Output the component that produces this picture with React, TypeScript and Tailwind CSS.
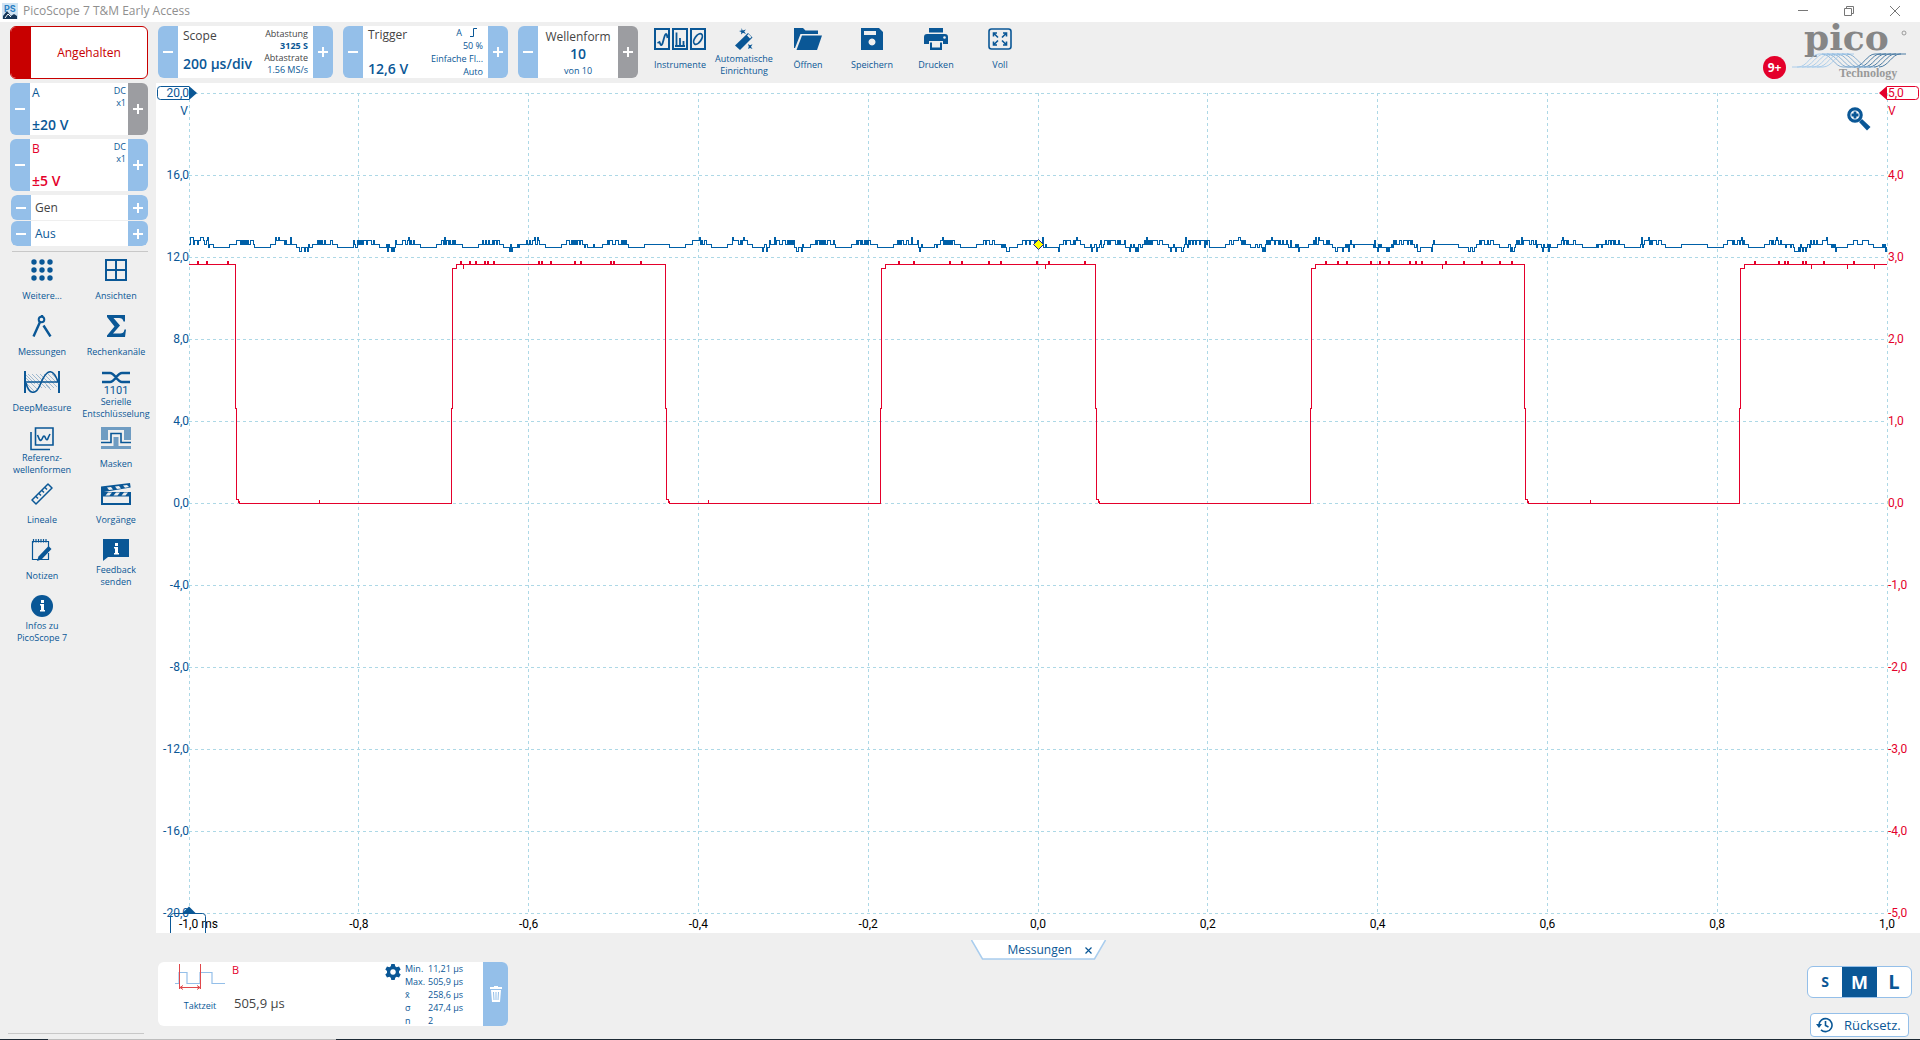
import type { ReactNode } from "react";

const BLUE = "#0a5796";
const RED = "#e4002b";

/* ---------- icons ---------- */

const GridDots = () => (
  <svg width="22" height="22" viewBox="0 0 22 22" fill={BLUE}>
    {[3, 11, 19].map((y) => [3, 11, 19].map((x) => <circle key={`${x}-${y}`} cx={x} cy={y} r="2.7" />))}
  </svg>
);

const ViewsIcon = () => (
  <svg width="22" height="22" viewBox="0 0 22 22" fill="none" stroke={BLUE} strokeWidth="2">
    <path d="M1 1h20v20H1zM11 1v20M1 11h20" />
  </svg>
);

const CompassIcon = () => (
  <svg width="22" height="22" viewBox="0 0 22 22" fill="none" stroke={BLUE} strokeWidth="2">
    <circle cx="10.500" cy="4.500" r="2.800" />
    <path d="M11 0v2M9 7L2.500 21.500M12.500 10.500L19.500 21.500" strokeWidth="2.400" />
  </svg>
);

const SigmaIcon = () => (
  <svg width="22" height="22" viewBox="0 0 22 22" fill={BLUE}>
    <path d="M2 0h18v6.500h-1.500C18 4 16.500 3 14 3H8.500l6.500 7.500L8 18.500h7c2.500 0 4-1 4.500-4H21L20 22H2v-1.500l7.500-9L2 2z" />
  </svg>
);

const DeepMeasureIcon = () => (
  <svg width="36" height="22" viewBox="0 0 36 22" fill="none" stroke={BLUE}>
    <path
      d="M2 7l12 12M2 4l9 9M4 3l14 14M8 3l14 14M12 3l14 14M16 3l14 14M20 3l13 13M24 3l9 9M28 3l5 5M2 12l8 8M22 14l5 5"
      strokeWidth="0.6"
      opacity="0.6"
    />
    <path d="M1 0v22M35 0v22" strokeWidth="2" />
    <path d="M1 11h34" strokeWidth="1.5" />
    <path d="M2 12c3 12 10 12 14 2S25-3 30 3c2 2 3 5 4 8" strokeWidth="1.6" />
  </svg>
);

const SerialIcon = () => (
  <svg className="shrink-0 overflow-visible" width="30" height="28" viewBox="0 0 30 28" fill="none">
    <path d="M1 2h8c5 0 7 9 12 9h8M1 11h8c5 0 7-9 12-9h8" stroke={BLUE} strokeWidth="2.4" />
    <text x="15" y="23" textAnchor="middle" fontFamily="Roboto, sans-serif" fontSize="11" fill={BLUE}>
      1101
    </text>
  </svg>
);

const ReferenceIcon = () => (
  <svg width="24" height="24" viewBox="0 0 24 24" fill="none" stroke={BLUE} strokeWidth="1.6">
    <path d="M5.500 1h17.500v17H5.500z" />
    <path d="M1 5v17.500h19" />
    <path d="M7.500 8l2 4.500c1 1.500 2 1 3-1.500s2-2.500 3 0 2 2.500 3-1l1.500-3" />
  </svg>
);

const MaskIcon = () => (
  <svg width="30" height="22" viewBox="0 0 30 22" fill="none">
    <path d="M0 0h30v13h-7V3H7v10H0z" fill="#6f9cc2" />
    <path d="M0 15.500h10v-9h10v9h10" stroke={BLUE} strokeWidth="1.600" />
    <path d="M12.500 10h5v9H30v3H0v-3h12.500z" fill="#6f9cc2" />
  </svg>
);

const RulerIcon = () => (
  <svg width="22" height="22" viewBox="0 0 22 22" fill="none" stroke={BLUE} strokeWidth="1.500">
    <path d="M17 1l4 4L5 21l-4-4z" strokeLinejoin="round" />
    <path d="M5 13.500l2 2M8 10.500l2 2M11 7.500l2 2M14 4.500l2 2" />
  </svg>
);

const ClapperIcon = () => (
  <svg width="30" height="22" viewBox="0 0 30 22">
    <path d="M0 3.500L29 0l.7 4.500L3 9h27v13H0z" fill={BLUE} />
    <path d="M2 13.500h26v6.500H2z" fill="#efefef" />
    <path
      d="M6 4.500l4-.5 2 2.500-4 .6zM14 3.500l4-.5 2 2.500-4 .6zM22 2.500l4-.5 2 2-4 .7zM7 9.500h4l-2.500 3h-4zM15 9.500h4l-2.500 3h-4zM23 9.500h4l-2.500 3h-4z"
      fill="#efefef"
    />
  </svg>
);

const NotesIcon = () => (
  <svg width="22" height="22" viewBox="0 0 22 22" fill="none" stroke={BLUE}>
    <path d="M17.500 14v6.500H1.500v-18h16V8" strokeWidth="1.200" />
    <path d="M2.500 3.500V0M5 3.500V0M7.500 3.500V0M10 3.500V0M12.500 3.500V0M15 3.500V0" strokeWidth="1.200" />
    <path d="M7.500 17.500L17.500 7l3 3L10.500 20.500l-4.500 1.500z" fill={BLUE} stroke="none" />
  </svg>
);

const FeedbackIcon = () => (
  <svg width="28" height="22" viewBox="0 0 28 22">
    <path d="M1 0h26v18H6l-5 4z" fill={BLUE} />
    <path d="M13 4h3v3h-3zM12 8h4v6h1v1.500h-5V14h1V9.500h-1z" fill="#fff" />
  </svg>
);

const InfoIcon = () => (
  <svg width="22" height="22" viewBox="0 0 22 22">
    <circle cx="11" cy="11" r="11" fill={BLUE} />
    <path d="M10 5h3v3h-3zM9 9h4v6h1v1.500H9V15h1v-4.500H9z" fill="#fff" />
  </svg>
);

const InstrumentsIcon = () => (
  <svg width="52" height="22" viewBox="0 0 52 22" fill="none" stroke={BLUE} strokeWidth="2">
    <path d="M1 1h14v20H1zM19 1h14v20H19zM37 1h14v20H37z" />
    <path d="M3.500 15l2-1c2 6 3 2 4-2 1.500-6 3-9 4-2" strokeWidth="1.800" />
    <path d="M21 18h10M22.500 18V4.500M26 18V10M29.500 18v-5" strokeWidth="1.800" />
    <ellipse cx="44" cy="11" rx="6" ry="3.200" transform="rotate(-55 44 11)" strokeWidth="1.800" />
  </svg>
);

const WandIcon = () => (
  <svg width="20" height="22" viewBox="0 0 20 22" fill="none">
    <path d="M14 5l4.500 4.500L6 22 1 17.500z" fill={BLUE} />
    <path d="M13 7.500l1.500-1.500 3 3-1.500 1.500z" fill="#efefef" />
    <path d="M7.500 0l1.200 2.500L12 1.500l-1.800 2L12 6 9 4.800 7 6.500l.3-2.500L5 3l2.500-.4zM14 16l2 1.200 2.500-1-1.500 2.500 1.500 2.300-2.500-1-2 1 .8-2.300z" fill={BLUE} />
  </svg>
);

const OpenIcon = () => (
  <svg width="28" height="22" viewBox="0 0 28 22" fill={BLUE}>
    <path d="M0 0h9l2.500 2.500H24V6H6.500L1 20H0z" />
    <path d="M8 7.500h20L23 22H2.500z" />
  </svg>
);

const SaveIcon = () => (
  <svg width="22" height="22" viewBox="0 0 22 22" fill={BLUE} fillRule="evenodd">
    <path d="M0 0h18l4 4v18H0zM3 3v4h12V3zM11 10.500a3.500 3.500 0 1 0 .01 0z" />
  </svg>
);

const PrintIcon = () => (
  <svg width="24" height="22" viewBox="0 0 24 22" fill={BLUE}>
    <path d="M5 0h14v4.500H5zM3 6h18q3 0 3 3v7h-5v-3H5v3H0V9q0-3 3-3z" />
    <path d="M6 14.500h12V22H6z" />
    <path d="M8 14h8v5.500H8z" fill="#efefef" />
    <circle cx="20.500" cy="9.500" r="1.300" fill="#efefef" />
  </svg>
);

const FullIcon = () => (
  <svg width="24" height="22" viewBox="0 0 24 22" fill="none" stroke={BLUE} strokeWidth="1.600">
    <rect x="1" y="1" width="22" height="20" rx="2.500" />
    <path d="M5.500 8.500V5H9M6 5.500l4 4M18.500 8.500V5H15M18 5.500l-4 4M5.500 13.500V17H9M6 16.500l4-4M18.500 13.500V17H15M18 16.500l-4-4" />
  </svg>
);

const PicoLogo = () => (
  <svg className="overflow-visible" width="118" height="56" viewBox="0 0 118 56" fill="none" role="img" aria-label="pico Technology">
    <text x="12" y="24" fontFamily="'DejaVu Serif', serif" fontWeight="700" fontSize="36" fill="#868686">
      pico
    </text>
    <circle cx="112" cy="7" r="2" stroke="#868686" strokeWidth="0.8" />
    {[0, 1, 2, 3, 4, 5].map((i) => (
      <g key={i} strokeWidth="0.9">
        <path d={`M${i * 5} 41h6c9 0 13-13 21-13h10`} stroke="#a5c9ea" />
        <path d={`M${30 + i * 5} 28c9 0 13 13 21 13h8`} stroke="#7fa9cf" />
        <path d={`M${62 + i * 5} 41c9 0 13-13 21-13h6`} stroke="#3a6f9c" />
      </g>
    ))}
    <text x="47" y="51" fontFamily="'Liberation Serif', serif" fontWeight="700" fontSize="12" fill="#999">
      Technology
    </text>
  </svg>
);

/* ---------- small controls ---------- */

const Step = ({ sign, label, side, muted }: { sign: "minus" | "plus"; label: string; side: string; muted?: boolean }) => (
  <button
    type="button"
    aria-label={label}
    className={`flex w-5 shrink-0 items-center justify-center ${side} ${muted ? "bg-[#9c9da1]" : "bg-[#94bfe9]"}`}
  >
    <svg width="10" height="10" viewBox="0 0 10 10" stroke="#fff" strokeWidth="2">
      <path d={sign === "plus" ? "M0 5h10M5 0v10" : "M0 5h10"} />
    </svg>
  </button>
);

const Card = ({
  name,
  width,
  children,
  plusMuted,
}: {
  name: string;
  width: string;
  children: ReactNode;
  plusMuted?: boolean;
}) => (
  <div className={`flex ${width}`}>
    <Step sign="minus" label={`${name} verringern`} side="rounded-l-md" />
    <div className="flex min-w-0 flex-1 justify-between bg-white">{children}</div>
    <Step sign="plus" label={`${name} erhöhen`} side="rounded-r-md" muted={plusMuted} />
  </div>
);

const Tool = ({ icon, lines }: { icon: ReactNode; lines: string[] }) => (
  <button type="button" className="flex flex-col items-center text-[9px] leading-3 text-[#0a5796]">
    <span className="flex h-[22px] items-start justify-center">{icon}</span>
    <span className="mt-[2px] flex h-[26px] flex-col justify-center whitespace-nowrap">
      {lines.map((l) => (
        <span key={l}>{l}</span>
      ))}
    </span>
  </button>
);

/* ---------- signals ---------- */

const WIDTH = 1698;
const HEIGHT = 820;

const noise = (n: number) => {
  const s = Math.sin(n * 127.1 + 11.7) * 43758.5453;
  return s - Math.floor(s);
};

// channel A: supply ripple, quantised to the ADC levels
const traceA = () => {
  const levels = [158, 154, 151, 147, 144, 141];
  let d = "M0 151.5";
  for (let x = 1; x <= WIDTH; x++) {
    const phase = Math.sin(((x - 1) * 2 * Math.PI) / 41.5);
    let level = phase < -0.35 ? 1 : 2;
    // some crests stay quiet, the others flicker between two levels
    if (phase > 0.3 && noise(x) > 0.45 && noise(Math.floor(x / 41.5) + 70) > 0.2) level = 3;
    const burst = noise(Math.floor(x / 11) + 400) > 0.62;
    if (burst && phase <= 0.3 && noise(x + 31) > 0.6) level += noise(x + 5000) > 0.5 ? -1 : 1;
    if (level === 3 && noise(x + 90) > (x < 30 ? 0.6 : 0.94)) level = 4;
    d += `V${levels[Math.max(0, level)] + 0.5}H${x}`;
  }
  return d;
};

// channel B: square wave, [rise, fall] pairs
const pulses = [
  [0, 47],
  [263, 477],
  [692, 907],
  [1122, 1336],
  [1551, WIDTH],
];

const traceB = () => {
  let d = "";
  pulses.forEach(([rise, fall], i) => {
    d += i === 0 ? "M0 171.5" : `H${rise - 0.5}V315.5h1V175.5H${rise + 4.5}V171.5`;
    for (let x = rise + 8; x < fall - 5; x += 3) {
      if (noise(x * 3) > 0.8) d += `H${x + 0.5}v-3h1v3`;
      else if (noise(x * 7) > 0.97) d += `H${x + 0.5}v4v-4`;
    }
    d += `H${fall - 0.5}`;
    if (fall < WIDTH) d += "V315.5h1V406.5h2v3h1v-2v3";
    if (fall === 47) d += "H130.5v-4v4";
    if (fall === 477) d += "H519.5v-4v4";
    if (fall === 1336) d += "H1401.5v-4v4";
  });
  return d;
};

const blueTicks = ["20,0", "16,0", "12,0", "8,0", "4,0", "0,0", "-4,0", "-8,0", "-12,0", "-16,0", "-20,0"];
const redTicks = ["5,0", "4,0", "3,0", "2,0", "1,0", "0,0", "-1,0", "-2,0", "-3,0", "-4,0", "-5,0"];
const timeTicks = ["-1,0 ms", "-0,8", "-0,6", "-0,4", "-0,2", "0,0", "0,2", "0,4", "0,6", "0,8", "1,0"];
const tenths = [0, 1, 2, 3, 4, 5, 6, 7, 8, 9, 10];

const Chart = () => (
  <div className="relative flex flex-1 overflow-hidden bg-white px-[33px] pt-[10px] pb-5 font-[Roboto,sans-serif] text-xs leading-[14px]">
    <div className="relative min-h-[400px] flex-1">
      <svg
        className="absolute inset-0 h-full w-full overflow-visible"
        viewBox={`0 0 ${WIDTH} ${HEIGHT}`}
        preserveAspectRatio="none"
        fill="none"
        shapeRendering="crispEdges"
      >
        <g stroke="#add8e6" strokeDasharray="3 3">
          {tenths.map((i) => (
            <path key={i} d={`M0 ${i * 82 + 0.5}H${WIDTH}M${Math.floor(i * 169.8) + 0.5} 0V${HEIGHT}`} />
          ))}
        </g>
        <path d={traceA()} stroke="#0060a8" />
        <path d={traceB()} stroke={RED} />
      </svg>
      {tenths.map((i) => (
        <span
          key={blueTicks[i]}
          className="absolute right-full -translate-y-1/2 text-[#0a5796]"
          style={{ top: `${i * 10}%` }}
        >
          {blueTicks[i]}
        </span>
      ))}
      {tenths.map((i) => (
        <span
          key={redTicks[i]}
          className="absolute left-full ml-px -translate-y-1/2 text-[#e4002b]"
          style={{ top: `${i * 10}%` }}
        >
          {redTicks[i]}
        </span>
      ))}
      {tenths.map((i) => (
        <span
          key={timeTicks[i]}
          className={`absolute top-full mt-1 whitespace-nowrap text-black ${i === 0 ? "-ml-[10px]" : "-translate-x-1/2"}`}
          style={{ left: `${i * 10}%` }}
        >
          {timeTicks[i]}
        </span>
      ))}
      <span className="absolute top-[11px] right-full mr-px text-[#0a5796]">V</span>
      <span className="absolute top-[11px] left-full ml-px text-[#e4002b]">V</span>

      {/* axis handles */}
      <svg className="absolute -top-2 -left-8 overflow-visible" width="40" height="16" fill="none">
        <path d="M32 1.500H3.500a3 3 0 0 0-3 3v7a3 3 0 0 0 3 3H32" stroke={BLUE} />
        <path d="M32 1l8 7-8 7z" fill={BLUE} />
      </svg>
      <svg className="absolute -top-2 -right-8 overflow-visible" width="40" height="16" fill="none">
        <path d="M8 1.500h28.500a3 3 0 0 1 3 3v7a3 3 0 0 1-3 3H8" stroke={RED} />
        <path d="M8 1L0 8l8 7z" fill={RED} />
      </svg>
      <svg className="absolute top-full -left-5 -mt-2 overflow-visible" width="40" height="28" fill="none">
        <path d="M1.500 28V11.500a3 3 0 0 1 3-3h29a3 3 0 0 1 3 3V28" stroke={BLUE} />
        <path d="M13 8.500l7-7 7 7z" fill={BLUE} />
      </svg>

      {/* trigger marker */}
      <svg className="absolute top-[18.500%] left-1/2 -mt-[6px] -ml-[5px]" width="11" height="11" viewBox="0 0 11 11">
        <path d="M5.500.5l5 5-5 5-5-5z" fill="#ffff00" stroke="#1a1a9c" />
      </svg>

      <button type="button" aria-label="Zoom" className="absolute top-[14px] right-4">
        <svg width="24" height="24" viewBox="0 0 24 24">
          <path d="M12 15l3-3 8.500 8L20 23.500z" fill={BLUE} />
          <circle cx="8" cy="8" r="6.200" fill="#fff" stroke={BLUE} strokeWidth="3.200" />
          <path d="M8 4.500v7M4.500 8h7" stroke={BLUE} strokeWidth="2.800" />
        </svg>
      </button>
    </div>
  </div>
);

/* ---------- page parts ---------- */

const TitleBar = () => (
  <header className="flex h-[22px] items-center justify-between bg-white">
    <div className="flex items-center gap-[5px] pl-[2px]">
      <svg className="overflow-visible" width="16" height="16" viewBox="0 0 16 16">
        <rect width="16" height="16" fill="#cfe3f3" />
        <path d="M1 16v-3l4-5 4 5 3-2 3 2v3z" fill="#15375a" />
        <path d="M3 15l3-4 3 3" stroke="#fff" fill="none" />
        <text x="2" y="9" fontFamily="Inter, sans-serif" fontWeight="700" fontSize="9" fill="#2b7fc3">
          PS
        </text>
      </svg>
      <h1 className="text-xs leading-4 text-[#8f8f8f]">PicoScope 7 T&amp;M Early Access</h1>
    </div>
    <div className="flex items-center gap-9 pr-5">
      <button type="button" aria-label="Minimieren">
        <svg width="10" height="10" viewBox="0 0 10 10" stroke="#777">
          <path d="M0 4.500h10" />
        </svg>
      </button>
      <button type="button" aria-label="Wiederherstellen">
        <svg width="10" height="10" viewBox="0 0 10 10" fill="none" stroke="#777">
          <path d="M.5 2.500h7v7h-7zM2.500 2.500v-2h7v7h-2" />
        </svg>
      </button>
      <button type="button" aria-label="Schließen">
        <svg width="10" height="10" viewBox="0 0 10 10" stroke="#777">
          <path d="M0 0l10 10M10 0L0 10" />
        </svg>
      </button>
    </div>
  </header>
);

const Channel = ({ name, range, color, plusMuted }: { name: string; range: string; color: string; plusMuted?: boolean }) => (
  <div className="mt-1 flex h-[52px]">
    <Card name={`Kanal ${name}`} width="w-full" plusMuted={plusMuted}>
      <div className={`flex flex-col justify-between pt-[2px] pb-px pl-[2px] ${color}`}>
        <span className="text-xs leading-4">{name}</span>
        <span className="text-sm leading-[18px] font-semibold">{range}</span>
      </div>
      <div className="pt-[2px] pr-[2px] text-right text-[9px] leading-3 text-[#0a5796]">
        <div>DC</div>
        <div>x1</div>
      </div>
    </Card>
  </div>
);

const sideTools = [
  { icon: <GridDots />, lines: ["Weitere..."] },
  { icon: <ViewsIcon />, lines: ["Ansichten"] },
  { icon: <CompassIcon />, lines: ["Messungen"] },
  { icon: <SigmaIcon />, lines: ["Rechenkanäle"] },
  { icon: <DeepMeasureIcon />, lines: ["DeepMeasure"] },
  { icon: <SerialIcon />, lines: ["Serielle", "Entschlüsselung"] },
  { icon: <ReferenceIcon />, lines: ["Referenz-", "wellenformen"] },
  { icon: <MaskIcon />, lines: ["Masken"] },
  { icon: <RulerIcon />, lines: ["Lineale"] },
  { icon: <ClapperIcon />, lines: ["Vorgänge"] },
  { icon: <NotesIcon />, lines: ["Notizen"] },
  { icon: <FeedbackIcon />, lines: ["Feedback", "senden"] },
  { icon: <InfoIcon />, lines: ["Infos zu", "PicoScope 7"] },
];

const Sidebar = () => (
  <aside className="flex w-[156px] shrink-0 flex-col pt-1">
    <div className="pr-2 pl-[10px]">
      <button
        type="button"
        className="flex h-[53px] w-full overflow-hidden rounded-md border border-[#c80000] bg-white text-xs text-[#c80000]"
      >
        <span className="h-full w-5 bg-[#c80000]" />
        <span className="flex h-full flex-1 items-center justify-center">Angehalten</span>
      </button>
      <Channel name="A" range="±20 V" color="text-[#0a5796]" plusMuted />
      <Channel name="B" range="±5 V" color="text-[#e4002b]" />
      <div className="mt-1 ml-px flex h-[51px] flex-col gap-px overflow-hidden rounded-md text-xs">
        {["Gen", "Aus"].map((t) => (
          <div key={t} className="flex flex-1">
            <Card name={t} width="w-full">
              <span className={`self-center pl-1 ${t === "Gen" ? "text-[#444]" : "text-[#0a5796]"}`}>{t}</span>
            </Card>
          </div>
        ))}
      </div>
      <hr className="mt-[5px] ml-[2px] border-[#c8c8c8]" />
    </div>
    <nav className="mt-[7px] grid auto-rows-[56px] grid-cols-2 pr-[3px] pl-[5px]">
      {sideTools.map((t) => (
        <Tool key={t.lines[0]} {...t} />
      ))}
    </nav>
    <hr className="mt-auto mr-3 mb-[5px] ml-2 border-[#c8c8c8]" />
  </aside>
);

const mainTools = [
  { icon: <InstrumentsIcon />, lines: ["Instrumente"] },
  { icon: <WandIcon />, lines: ["Automatische", "Einrichtung"] },
  { icon: <OpenIcon />, lines: ["Öffnen"] },
  { icon: <SaveIcon />, lines: ["Speichern"] },
  { icon: <PrintIcon />, lines: ["Drucken"] },
  { icon: <FullIcon />, lines: ["Voll"] },
];

const Toolbar = () => (
  <div className="flex h-[61px] items-start pt-1 pl-[2px]">
    <div className="flex h-[52px] gap-[10px]">
      <Card name="Zeitbasis" width="w-[175px]">
        <div className="flex flex-col justify-between pt-[2px] pb-1 pl-[5px]">
          <span className="text-xs leading-4 text-[#444]">Scope</span>
          <span className="text-sm leading-5 font-semibold whitespace-nowrap text-[#0a5796]">200 µs/div</span>
        </div>
        <div className="pt-[2px] pr-[5px] text-right text-[9px] leading-3 text-[#444]">
          <div>Abtastung</div>
          <div className="font-bold text-[#0a5796]">3125 S</div>
          <div>Abtastrate</div>
          <div className="text-[#0a5796]">1.56 MS/s</div>
        </div>
      </Card>
      <Card name="Trigger" width="w-[165px]">
        <div className="flex flex-col justify-between pt-px pl-[5px]">
          <span className="text-xs leading-4 text-[#444]">Trigger</span>
          <span className="text-sm leading-[18px] font-semibold whitespace-nowrap text-[#0a5796]">12,6 V</span>
        </div>
        <div className="pr-[5px] text-right text-[9px] leading-[13px] text-[#0a5796]">
          <div className="flex items-center justify-end gap-2 pr-[5px]">
            A
            <svg width="8" height="9" viewBox="0 0 8 9" fill="none" stroke={BLUE}>
              <path d="M0 8.500h3.500v-8H7" />
            </svg>
          </div>
          <div>50 %</div>
          <div>Einfache Fl...</div>
          <div>Auto</div>
        </div>
      </Card>
      <Card name="Wellenform" width="w-[120px]" plusMuted>
        <div className="flex-1 pt-[3px] text-center text-[#0a5796]">
          <div className="text-xs leading-4 text-[#444]">Wellenform</div>
          <div className="text-sm leading-[18px] font-semibold">10</div>
          <div className="text-[9px] leading-4">von 10</div>
        </div>
      </Card>
    </div>
    <div className="ml-[10px] grid auto-cols-[64px] grid-flow-col pt-[2px]">
      {mainTools.map((t) => (
        <Tool key={t.lines[0]} {...t} />
      ))}
    </div>
    <div className="ml-auto flex items-start pr-[10px]">
      <span className="mt-[30px] flex size-[23px] items-center justify-center rounded-full bg-[#e4002b] text-xs font-bold text-white">
        9+
      </span>
      <span className="ml-[6px]">
        <PicoLogo />
      </span>
    </div>
  </div>
);

const stats = [
  ["Min.", "11,21 µs"],
  ["Max.", "505,9 µs"],
  ["x̄", "258,6 µs"],
  ["σ", "247,4 µs"],
  ["n", "2"],
];

const Measurement = () => (
  <section className="flex h-16 w-[350px] overflow-hidden rounded-md bg-white">
    <div className="flex flex-1 text-[#0a5796]">
      <div className="flex w-[74px] flex-col items-center pl-[10px]">
        <svg className="mt-[2px]" width="50" height="26" viewBox="0 0 50 26" fill="none">
          <path d="M0 19.500h4v-11h8v11h13v-11h12v11h13" stroke="#94bfe9" strokeWidth="1.200" />
          <path d="M4.500 0v25M25.500 0v25M5 23.500h20M8 21.500l-3 2 3 2M22 21.500l3 2-3 2" stroke="#e0484c" />
        </svg>
        <span className="mt-[10px] text-[9px] leading-3">Taktzeit</span>
      </div>
      <div className="w-[153px]">
        <div className="text-[11px] leading-4 text-[#e4002b]">B</div>
        <div className="mt-4 pl-[2px] text-[13px] leading-[18px] text-[#444]">505,9 µs</div>
      </div>
      <button type="button" aria-label="Einstellungen" className="mt-[2px] h-4 w-4">
        <svg width="16" height="16" viewBox="0 0 16 16" fill={BLUE} fillRule="evenodd">
          <path d="M6.300 0h3.400l.5 2.300 1.500.9 2.300-.8 1.700 3L14 7v2l1.700 1.600-1.700 3-2.300-.8-1.500.9-.5 2.300H6.300l-.5-2.300-1.500-.9-2.300.8-1.700-3L2 9V7L.3 5.400l1.700-3 2.300.8 1.500-.9zM8 5.200a2.800 2.800 0 1 0 .01 0z" />
        </svg>
      </button>
      <table className="ml-1 self-start text-left text-[9px] leading-[13px]">
        <tbody>
          {stats.map(([k, v]) => (
            <tr key={k}>
              <th className="w-[23px] p-0 font-normal">{k}</th>
              <td className="p-0 whitespace-nowrap">{v}</td>
            </tr>
          ))}
        </tbody>
      </table>
    </div>
    <button type="button" aria-label="Messung löschen" className="flex w-[25px] items-center justify-center bg-[#94bfe9]">
      <svg width="12" height="16" viewBox="0 0 12 16" fill="#fff" fillRule="evenodd">
        <path d="M4 0h4v1h4v2H0V1h4zM1 4h10l-1 12H2zM3 6l.5 8h1L4 6zM5.500 6v8h1V6zM8 6l-.5 8h1L9 6z" />
      </svg>
    </button>
  </section>
);

const Footer = () => (
  <footer className="pt-[7px] pb-[2px]">
    <div className="flex justify-center">
      <div className="relative flex h-5 w-[135px] items-center pl-[37px] text-[#0a5796]">
        <svg className="absolute inset-0" width="135" height="20" viewBox="0 0 135 20">
          <path d="M.5 0L11.500 19h112L134.500 0" fill="#fff" stroke="#a9cdee" strokeWidth="1.500" />
        </svg>
        <button type="button" className="relative text-xs leading-4">
          Messungen
        </button>
        <button type="button" aria-label="Messungen schließen" className="relative ml-auto pr-[14px]">
          <svg width="7" height="7" viewBox="0 0 7 7" stroke={BLUE} strokeWidth="1.200">
            <path d="M.5.5l6 6M6.500.5l-6 6" />
          </svg>
        </button>
      </div>
    </div>
    <div className="mt-[2px] flex items-start justify-between pr-2 pl-[2px]">
      <Measurement />
      <div className="flex flex-col items-center gap-[15px] pt-1 text-[#0a5796]">
        <div className="flex h-8 w-[105px] overflow-hidden rounded-md border border-[#94bfe9] bg-white font-bold">
          <button type="button" className="flex-1 text-sm">
            S
          </button>
          <button type="button" className="flex-1 bg-[#0a5796] text-lg leading-none text-white">
            M
          </button>
          <button type="button" className="flex-1 text-xl leading-none">
            L
          </button>
        </div>
        <button
          type="button"
          className="flex h-6 w-[99px] items-center gap-[11px] rounded border border-[#94bfe9] bg-white pl-[5px] text-[13px] leading-5"
        >
          <svg width="17" height="16" viewBox="0 0 17 16" fill="none" stroke={BLUE} strokeWidth="1.600">
            <path d="M3 8a6.500 6.500 0 1 1 2 4.800M9.500 4v4.500l3 1.500" />
            <path d="M0 7h6L3 11z" fill={BLUE} stroke="none" />
          </svg>
          Rücksetz.
        </button>
      </div>
    </div>
  </footer>
);

const App = () => {
  return (
    <div className="flex min-h-screen flex-col bg-[#efefef] font-['Open_Sans','Noto_Sans',sans-serif]">
      <TitleBar />
      <main className="flex flex-1">
        <Sidebar />
        <div className="flex min-w-0 flex-1 flex-col">
          <Toolbar />
          <Chart />
          <Footer />
        </div>
      </main>
      <div className="flex h-px bg-[#1d2a35]">
        <div className="ml-12 w-72 bg-[#bdbdbd]" />
      </div>
    </div>
  );
};

export default App;
